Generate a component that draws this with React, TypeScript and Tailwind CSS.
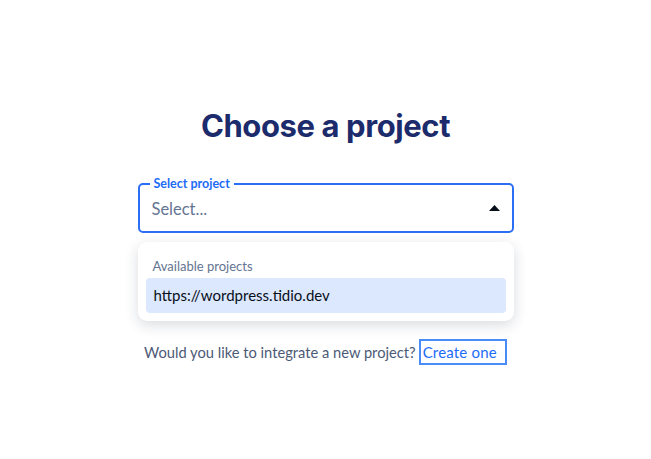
import * as React from 'react';

function ProjectSelect() {
  return (
    <div className="relative flex h-[50px] w-[376px] items-center justify-between rounded-[5px] border-2 border-[#2a6ff5] pl-[12px] pr-[12px]">
      <span className="absolute -top-[9px] left-[10px] bg-white px-[4px] text-[12.5px] font-bold leading-[16px] text-[#1c6cf6]">
        Select project
      </span>
      <span className="pt-[3px] text-[16.5px] text-[#647491]">Select...</span>
      <svg width="11" height="6" viewBox="0 0 11 6">
        <path d="M5.5 0 L11 6 L0 6 Z" fill="#080f1a" />
      </svg>
    </div>
  );
}

function ProjectList() {
  return (
    <div className="mt-[9px] w-[376px] rounded-[9px] bg-white px-[8px] pb-[8px] pt-[15px] shadow-[0_4px_14px_rgba(20,30,60,0.16)]">
      <div className="px-[7px] pb-[3px] text-[13px] leading-[18px] text-[#647491]">Available projects</div>
      <div className="flex h-[35px] items-center rounded-[4px] bg-[#dce8fd] px-[8px] text-[15px] text-[#080f1a]">
        https://wordpress.tidio.dev
      </div>
    </div>
  );
}

export default function App() {
  return (
    <div
      className="flex min-h-[459px] flex-col items-center bg-white pt-[104px]"
      style={{ fontFamily: 'Lato, "Noto Sans", sans-serif' }}
    >
      <h1
        className="text-[31px] font-bold leading-[44px] tracking-[-0.4px] text-[#1c2b6b]"
        style={{ fontFamily: 'Inter, sans-serif' }}
      >
        Choose a project
      </h1>
      <div className="mt-[35px]">
        <ProjectSelect />
        <ProjectList />
      </div>
      <div className="mt-[18px] flex items-center text-[14.7px] text-[#4c5a76]">
        <span>Would you like to integrate a new project?</span>
        <button className="ml-[3px] h-[26px] border-2 border-[#4a8cf7] pl-[2px] pr-[8px] text-[15px] leading-[18px] tracking-[0.2px] text-[#1c6cf6]">
          Create one
        </button>
      </div>
    </div>
  );
}
